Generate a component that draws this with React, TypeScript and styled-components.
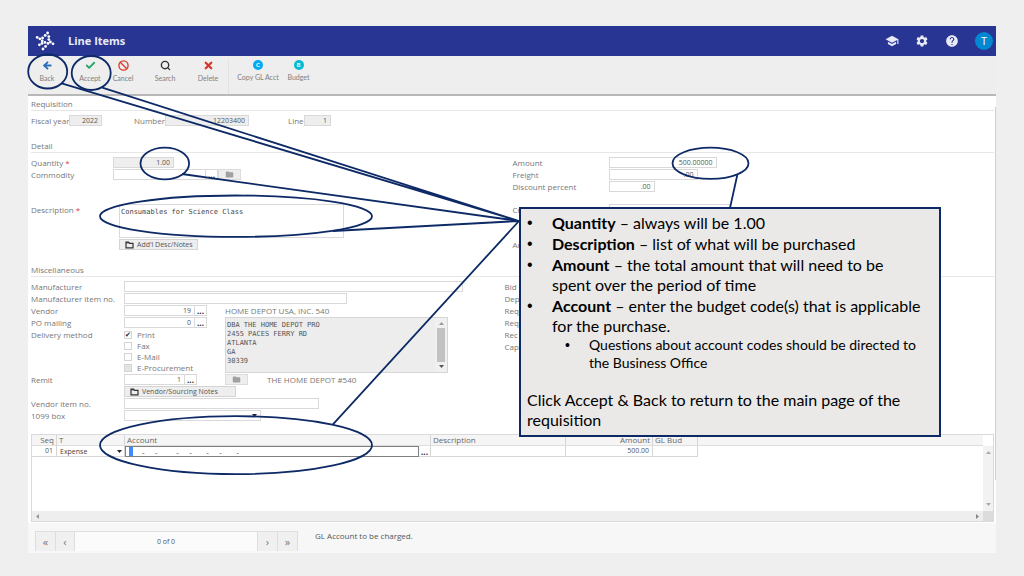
import React from "react";
import styled, { createGlobalStyle } from "styled-components";
import { ArrowLeft, Check, Search, X, Ban } from "lucide-react";
import { MdSchool, MdSettings, MdHelp, MdFolder } from "react-icons/md";

const ui = `"Open Sans", "Noto Sans", sans-serif`;
const mono = `"DejaVu Sans Mono", monospace`;
const navy = "#0d2a66";

const GlobalStyle = createGlobalStyle`
  * { box-sizing: border-box; }
  body { margin: 0; background: #efefef; font-family: ${ui}; font-size: 8px; color: #777; }
  button, input, select, textarea { font-family: inherit; margin: 0; border-radius: 0; outline: none; }
`;

const Page = styled.div`
  position: relative;
  min-height: 100vh;
  padding: 26px 28px 24px;
`;
const Header = styled.header`
  display: flex;
  align-items: center;
  height: 30px;
  padding: 0 3px 0 7px;
  background: #283593;
  color: #e8eaf6;
`;
const Title = styled.h1`
  flex: 1;
  margin: 0 0 0 13px;
  font-size: 11px;
  font-weight: 700;
  line-height: 16px;
`;
const HeaderActions = styled.div`
  display: flex;
  align-items: center;
  gap: 16px;
`;
const IconButton = styled.button`
  display: flex;
  padding: 0;
  border: 0;
  background: none;
  color: inherit;
  font-size: 14px;
`;
const Avatar = styled.button`
  width: 18px;
  height: 18px;
  padding: 0;
  border: 0;
  border-radius: 50% !important;
  background: #0288d1;
  color: #fff;
  font-size: 11px;
  line-height: 18px;
`;

const Toolbar = styled.nav`
  display: flex;
  height: 40px;
  padding-top: 4px;
  background: #eeeeee;
  border-bottom: 2px solid #b8b8b8;
`;
const Tool = styled.button<{ $w: number; $color: string }>`
  display: flex;
  flex-direction: column;
  align-items: center;
  gap: 2px;
  width: ${(p) => p.$w}px;
  height: 22px;
  padding: 0;
  border: 0;
  background: none;
  color: #808080;
  font-family: Lato, sans-serif;
  font-size: 7px;
  line-height: 10px;
  white-space: nowrap;
  svg { color: ${(p) => p.$color}; flex: none; }
`;
const Divider = styled.span`
  width: 1px;
  height: 34px;
  margin-left: 10px;
  background: #e2e2e2;
`;
const Disc = styled.span<{ $bg: string }>`
  width: 10px;
  height: 10px;
  border-radius: 50%;
  background: ${(p) => p.$bg};
  color: #fff;
  font-size: 6px;
  font-weight: 700;
  line-height: 10px;
  text-align: center;
`;

const Main = styled.main`
  position: relative;
  padding: 1px 2px 1px 3px;
  background: #fff;
`;
const PageScroll = styled.span`
  position: absolute;
  top: 11px;
  right: 0;
  width: 1px;
  height: 373px;
  background: #cfcfcf;
`;
const Section = styled.section`
  padding-bottom: 12px;
`;
const SectionTitle = styled.h2`
  height: 14px;
  margin: 0 0 4px;
  border-bottom: 1px solid #e6e6e6;
  font-size: 8px;
  font-weight: 400;
  line-height: 13px;
`;
const Columns = styled.div<{ $split: string }>`
  display: grid;
  grid-template-columns: ${(p) => p.$split};
`;
const Row = styled.div<{ $label?: number; $gap?: number }>`
  display: flex;
  min-height: 12px;
  margin-top: ${(p) => p.$gap ?? 0}px;
  > label { width: ${(p) => p.$label ?? 82}px; flex: none; }
`;
const Label = styled.label`
  line-height: 12px;
  white-space: nowrap;
  b { color: #e53935; font-weight: 400; }
`;
const Text = styled.span`
  line-height: 12px;
  white-space: nowrap;
`;
const RemitName = styled(Text)`
  margin-left: 19px;
`;
const Pair = styled.div<{ $label: number; $end: number }>`
  display: flex;
  margin-right: ${(p) => p.$end}px;
  > label { width: ${(p) => p.$label}px; }
`;
const Field = styled.input<{ $w: number; $off?: boolean }>`
  width: ${(p) => p.$w}px;
  height: 11px;
  padding: 0 3px;
  border: 1px solid #d9d9d9;
  background: ${(p) => (p.$off ? "#eeeeee" : "#fff")};
  color: #555;
  font-size: 7px;
  line-height: 9px;
  text-align: right;
`;
const More = styled.button`
  width: 12px;
  height: 11px;
  padding: 0;
  border: 1px solid #d9d9d9;
  border-left: 0;
  background: #fff;
  color: #222;
  font-size: 8px;
  font-weight: 700;
  line-height: 7px;
`;
const FolderButton = styled.button`
  display: flex;
  align-items: center;
  justify-content: center;
  width: 23px;
  height: 11px;
  padding: 0;
  border: 1px solid #dcdcdc;
  background: #eeeeee;
  color: #a0a0a0;
  font-size: 9px;
`;
const NotesButton = styled.button<{ $w: number }>`
  display: flex;
  align-items: center;
  gap: 3px;
  width: ${(p) => p.$w}px;
  height: 11px;
  padding: 0 5px;
  border: 1px solid #d4d4d4;
  background: #eeeeee;
  color: #555;
  font-size: 7px;
  line-height: 9px;
  white-space: nowrap;
  svg { flex: none; }
`;
const Stack = styled.div`
  display: flex;
  flex-direction: column;
  gap: 1px;
  margin-left: 6px;
`;
const Notes = styled.textarea`
  width: 225px;
  height: 34px;
  padding: 3px 1px;
  border: 1px solid #d9d9d9;
  background: #fff;
  color: #444;
  font-family: ${mono};
  font-size: 7px;
  line-height: 9px;
  resize: none;
`;

const MiscGrid = styled.div`
  display: grid;
  grid-template-columns: 93px 101px 1fr;
  grid-template-rows: repeat(4, 12px) 45px repeat(4, 12px);
`;
const Cell = styled.div<{ $row: number; $col: string; $span?: number }>`
  display: flex;
  grid-row: ${(p) => p.$row} / span ${(p) => p.$span ?? 1};
  grid-column: ${(p) => p.$col};
`;
const Checks = styled.div`
  display: flex;
  flex-direction: column;
  label { display: flex; align-items: center; gap: 5px; height: 11px; line-height: 11px; white-space: nowrap; }
`;
const Tick = styled.input`
  appearance: none;
  width: 8px;
  height: 8px;
  border: 1px solid #d4d4d4;
  background: ${(p) => (p.disabled ? "#e4e4e4" : "#fff")};
  &:checked::after {
    content: "✔";
    display: block;
    color: #222;
    font: 7px/6px "DejaVu Sans", sans-serif;
  }
`;
const AddressBox = styled.div`
  display: flex;
  width: 223px;
  height: 56px;
  border: 1px solid #d6d6d6;
  background: #ededed;
`;
const Address = styled.textarea`
  flex: 1;
  min-width: 0;
  padding: 3px 1px;
  border: 0;
  background: none;
  color: #555;
  font-family: ${mono};
  font-size: 7px;
  line-height: 9px;
  resize: none;
  overflow: hidden;
`;
const ScrollTrack = styled.div`
  display: flex;
  flex-direction: column;
  align-items: center;
  justify-content: space-between;
  width: 12px;
  padding: 3px 0;
  background: #f0f0f0;
`;
const Thumb = styled.span`
  width: 8px;
  height: 34px;
  background: #c1c1c1;
`;
const SelectBox = styled.div<{ $w: string; $line?: boolean }>`
  display: flex;
  align-items: center;
  width: ${(p) => p.$w};
  height: ${(p) => (p.$line ? 11 : 9)}px;
  padding-right: ${(p) => (p.$line ? 3 : 0)}px;
  border: ${(p) => (p.$line ? "1px solid #d9d9d9" : "0")};
  select {
    appearance: none;
    flex: 1;
    height: 9px;
    min-width: 0;
    padding: 0 1px;
    border: 0;
    background: none;
    color: #444;
    font-size: 7px;
    line-height: 9px;
  }
`;

const GridFrame = styled.div`
  display: flex;
  flex-direction: column;
  border: 1px solid #dadada;
`;
const GridBody = styled.div`
  display: flex;
  min-height: 76px;
`;
const GridScroll = styled.div`
  display: flex;
  flex-direction: column;
  justify-content: space-between;
  align-items: center;
  width: 10px;
  margin-top: 11px;
  padding: 4px 0;
  background: #f2f2f2;
`;
const BottomScroll = styled.div`
  display: flex;
  align-items: center;
  height: 10px;
  background: #eeeeee;
  padding-left: 3px;
  i { flex: 1; }
  b { width: 10px; height: 10px; margin-left: 3px; background: #dcdcdc; }
`;
const TableWrap = styled.div`
  flex: 1;
  min-width: 0;
`;
const Table = styled.table`
  width: 100%;
  table-layout: fixed;
  border-collapse: separate;
  border-spacing: 0;
  th, td { height: 11px; padding: 0 2px; text-align: left; font-weight: 400; line-height: 10px; }
  th { background: #f5f5f5; color: #666; border-right: 1px solid #d6d6d6; border-bottom: 1px solid #dedede; white-space: nowrap; }
  td { border-right: 1px solid #d6d6d6; border-bottom: 1px solid #d6d6d6; color: #555; font-size: 7px; }
  th:last-child, td:last-child { border-right: 0; }
  td:last-child { border-bottom: 0; }
  .num { text-align: right; }
  td.num { padding-right: 3px; }
`;
const AccountCell = styled.div`
  display: flex;
  align-items: center;
  height: 10px;
  margin: 0 -2px;
`;
const AccountField = styled.div`
  display: flex;
  flex: 1;
  height: 11px;
  min-width: 0;
  padding-left: 3px;
  border: 1px solid #808080;
  span { width: 4px; background: #3d8bfd; }
  input { flex: 1; min-width: 0; height: 9px; padding: 0 0 0 9px; border: 0; background: none; color: #444; font-size: 8px; line-height: 9px; }
`;
const Dots = styled.button`
  width: 11px;
  padding: 0;
  border: 0;
  background: none;
  color: #222;
  font-size: 8px;
  font-weight: 700;
  line-height: 7px;
`;

const Footer = styled.footer`
  display: flex;
  min-height: 30px;
  padding: 8px 7px 1px;
  background: #f7f7f7;
  color: #555;
  font-size: 7px;
`;
const Pager = styled.div`
  display: grid;
  grid-template-columns: 20px 19px 183px 20px 19px;
  height: 20px;
  border: 1px solid #dedede;
  button { padding: 0; border: 0; border-right: 1px solid #dedede; background: #f0f0f0; color: #777; font-size: 11px; line-height: 16px; }
  span { border-right: 1px solid #dedede; background: #fbfbfb; text-align: center; line-height: 19px; }
  button:last-child { border-right: 0; }
`;
const Hint = styled.p`
  margin: 0 0 0 17px;
  line-height: 10px;
  font-size: 8px;
`;

const Ink = styled.svg`
  position: absolute;
  top: 0;
  left: 0;
  pointer-events: none;
  fill: none;
  stroke: ${navy};
  stroke-width: 1.8;
`;
const Callout = styled.aside`
  position: absolute;
  top: 207px;
  left: 519px;
  width: 422px;
  height: 230px;
  padding: 4px 6px;
  border: 2px solid ${navy};
  background: #eae9e7;
  color: #000;
  font-family: Lato, "Liberation Sans", sans-serif;
  font-size: 16px;
  line-height: 20px;
  white-space: nowrap;
  ul { margin: 0; padding: 0; list-style: none; }
  p { margin: 18px 0 0; }
`;
const Point = styled.li<{ $small?: boolean }>`
  display: flex;
  margin-top: ${(p) => (p.$small ? 0 : 1)}px;
  padding-left: ${(p) => (p.$small ? 38 : 0)}px;
  font-size: ${(p) => (p.$small ? 14 : 16)}px;
  line-height: ${(p) => (p.$small ? 18 : 20)}px;
  &:first-child { margin-top: 0; }
  &::before { content: "•"; width: ${(p) => (p.$small ? 24 : 25)}px; flex: none; font-family: "Liberation Sans", sans-serif; }
`;

const Logo = () => (
  <svg width="20" height="20" viewBox="0 0 20 20" fill="#fff" aria-hidden="true">
    {[
      [12.6, 2], [10.2, 4.4], [7.6, 7], [2.2, 6.4], [4.9, 7.8], [7.2, 9.8],
      [13.8, 5.6], [13.8, 8.6], [15.4, 11], [18, 12.8],
      [4.4, 13.8], [7, 12.4], [10, 11.4], [13, 12.4], [10.6, 15.4], [8, 18],
    ].map(([x, y]) => (
      <circle key={`${x}-${y}`} cx={x} cy={y} r="1.4" />
    ))}
  </svg>
);
const FolderLine = () => (
  <svg width="9" height="8" viewBox="0 0 9 8" fill="none" stroke="#333" strokeWidth="1.2" aria-hidden="true">
    <path d="M1 1.2h2.6l1 1.1H8v4.6H1z" />
    <path d="M1 1.7h3" />
  </svg>
);
const Arrow = ({ d, color = "#777" }: { d: "up" | "down" | "left" | "right"; color?: string }) => (
  <svg width="5" height="5" viewBox="0 0 5 5" fill={color} aria-hidden="true">
    <path d={{ up: "M0 4L2.5 1 5 4z", down: "M0 1h5L2.5 4z", left: "M4 0v5L1 2.5z", right: "M1 0l3 2.5L1 5z" }[d]} />
  </svg>
);

const ACCOUNT_MASK = [0, 5, 9, 5, 7, 5, 7].map((n) => "\u00a0".repeat(n) + "-").join("");

export default function App() {
  return (
    <Page>
      <GlobalStyle />
      <Header>
        <Logo />
        <Title>Line Items</Title>
        <HeaderActions>
          <IconButton aria-label="Learning"><MdSchool /></IconButton>
          <IconButton aria-label="Settings"><MdSettings /></IconButton>
          <IconButton aria-label="Help"><MdHelp /></IconButton>
          <Avatar>T</Avatar>
        </HeaderActions>
      </Header>

      <Toolbar>
        <Tool $w={38} $color="#2a6ebb"><ArrowLeft size={11} strokeWidth={4} />Back</Tool>
        <Tool $w={48} $color="#27a567"><Check size={11} strokeWidth={4} />Accept</Tool>
        <Tool $w={18} $color="#dd3b2a"><Ban size={11} strokeWidth={3} />Cancel</Tool>
        <Tool $w={66} $color="#333"><Search size={11} strokeWidth={3} />Search</Tool>
        <Tool $w={20} $color="#d9382b"><X size={11} strokeWidth={5} />Delete</Tool>
        <Divider />
        <Tool $w={58} $color="#03a9f4"><Disc $bg="#03a9f4">C</Disc>Copy GL Acct</Tool>
        <Tool $w={23} $color="#00bcd4"><Disc $bg="#00bcd4">B</Disc>Budget</Tool>
      </Toolbar>

      <Main>
        <PageScroll />
        <Section>
          <SectionTitle>Requisition</SectionTitle>
          <Row>
            <Pair $label={38} $end={32}>
              <Label htmlFor="fy">Fiscal year</Label>
              <Field id="fy" $w={33} $off readOnly value="2022" />
            </Pair>
            <Pair $label={31} $end={39}>
              <Label htmlFor="num">Number</Label>
              <Field id="num" $w={84} $off readOnly value="12203400" />
            </Pair>
            <Pair $label={16} $end={0}>
              <Label htmlFor="line">Line</Label>
              <Field id="line" $w={27} $off readOnly value="1" />
            </Pair>
          </Row>
        </Section>

        <Section>
          <SectionTitle>Detail</SectionTitle>
          <Columns $split="1fr 1fr">
            <div>
              <Row>
                <Label htmlFor="qty">Quantity <b>*</b></Label>
                <Field id="qty" $w={61} $off readOnly value="1.00" />
              </Row>
              <Row>
                <Label htmlFor="com">Commodity</Label>
                <Field id="com" $w={93} />
                <More aria-label="Find commodity">...</More>
                <FolderButton aria-label="Commodity files"><MdFolder /></FolderButton>
              </Row>
              <Row $gap={23}>
                <Label htmlFor="desc">Description <b>*</b></Label>
                <Stack>
                  <Notes id="desc" defaultValue="Consumables for Science Class" />
                  <NotesButton $w={79}><FolderLine />Add'l Desc/Notes</NotesButton>
                </Stack>
              </Row>
            </div>
            <div>
              <Row $label={96}>
                <Label htmlFor="amt">Amount</Label>
                <Field id="amt" $w={108} defaultValue="500.00000" />
              </Row>
              <Row $label={96}>
                <Label htmlFor="frt">Freight</Label>
                <Field id="frt" $w={89} defaultValue=".00" />
              </Row>
              <Row $label={96}>
                <Label htmlFor="dsc">Discount percent</Label>
                <Field id="dsc" $w={46} defaultValue=".00" />
              </Row>
              <Row $label={96} $gap={11}>
                <Label htmlFor="crd">Cr</Label>
                <Field id="crd" $w={121} defaultValue=".00" />
              </Row>
              <Row $label={96} $gap={23}>
                <Text>Am</Text>
              </Row>
            </div>
          </Columns>
        </Section>

        <Section>
          <SectionTitle>Miscellaneous</SectionTitle>
          <Columns $split="59fr 61fr">
            <MiscGrid>
              <Cell $row={1} $col="1"><Label htmlFor="mfr">Manufacturer</Label></Cell>
              <Cell $row={1} $col="2 / 4"><Field id="mfr" $w={339} /></Cell>
              <Cell $row={2} $col="1"><Label htmlFor="mfi">Manufacturer item no.</Label></Cell>
              <Cell $row={2} $col="2 / 4"><Field id="mfi" $w={223} /></Cell>
              <Cell $row={3} $col="1"><Label htmlFor="ven">Vendor</Label></Cell>
              <Cell $row={3} $col="2"><Field id="ven" $w={71} defaultValue="19" /><More aria-label="Find vendor">...</More></Cell>
              <Cell $row={3} $col="3"><Text>HOME DEPOT USA, INC. 540</Text></Cell>
              <Cell $row={4} $col="1"><Label htmlFor="pom">PO mailing</Label></Cell>
              <Cell $row={4} $col="2"><Field id="pom" $w={71} defaultValue="0" /><More aria-label="Find mailing">...</More></Cell>
              <Cell $row={4} $col="3" $span={2}>
                <AddressBox>
                  <Address
                    aria-label="Vendor address"
                    readOnly
                    value={"DBA THE HOME DEPOT PRO\n2455 PACES FERRY RD\nATLANTA\nGA\n30339"}
                  />
                  <ScrollTrack>
                    <Arrow d="up" color="#999" />
                    <Thumb />
                    <Arrow d="down" color="#555" />
                  </ScrollTrack>
                </AddressBox>
              </Cell>
              <Cell $row={5} $col="1"><Text>Delivery method</Text></Cell>
              <Cell $row={5} $col="2">
                <Checks>
                  <label><Tick type="checkbox" defaultChecked />Print</label>
                  <label><Tick type="checkbox" />Fax</label>
                  <label><Tick type="checkbox" />E-Mail</label>
                  <label><Tick type="checkbox" disabled />E-Procurement</label>
                </Checks>
              </Cell>
              <Cell $row={6} $col="1"><Label htmlFor="rem">Remit</Label></Cell>
              <Cell $row={6} $col="2"><Field id="rem" $w={61} defaultValue="1" /><More aria-label="Find remit">...</More></Cell>
              <Cell $row={6} $col="3">
                <FolderButton aria-label="Remit files"><MdFolder /></FolderButton>
                <RemitName>THE HOME DEPOT #540</RemitName>
              </Cell>
              <Cell $row={7} $col="2 / 4"><NotesButton $w={112}><FolderLine />Vendor/Sourcing Notes</NotesButton></Cell>
              <Cell $row={8} $col="1"><Label htmlFor="vin">Vendor item no.</Label></Cell>
              <Cell $row={8} $col="2 / 4"><Field id="vin" $w={195} /></Cell>
              <Cell $row={9} $col="1"><Label htmlFor="box">1099 box</Label></Cell>
              <Cell $row={9} $col="2 / 4">
                <SelectBox $w="137px" $line>
                  <select id="box"><option /></select>
                  <Arrow d="down" color="#222" />
                </SelectBox>
              </Cell>
            </MiscGrid>
            <div>
              {["Bid", "Dep", "Req", "Req", "Rec", "Cap"].map((t, i) => (
                <Row key={i}><Text>{t}</Text></Row>
              ))}
            </div>
          </Columns>
        </Section>

        <GridFrame>
          <GridBody>
            <TableWrap>
              <Table>
                <colgroup>
                  <col width="25" /><col width="68" /><col width="306" /><col width="135" />
                  <col width="87" /><col width="45" /><col />
                </colgroup>
                <thead>
                  <tr>
                    <th className="num">Seq</th><th>T</th><th>Account</th><th>Description</th>
                    <th className="num">Amount</th><th>GL Bud</th><th />
                  </tr>
                </thead>
                <tbody>
                  <tr>
                    <td className="num">01</td>
                    <td>
                      <SelectBox $w="100%">
                        <select aria-label="Type"><option>Expense</option></select>
                        <Arrow d="down" color="#222" />
                      </SelectBox>
                    </td>
                    <td>
                      <AccountCell>
                        <AccountField>
                          <span />
                          <input aria-label="Account" defaultValue={ACCOUNT_MASK} />
                        </AccountField>
                        <Dots aria-label="Find account">...</Dots>
                      </AccountCell>
                    </td>
                    <td />
                    <td className="num">500.00</td>
                    <td />
                    <td />
                  </tr>
                </tbody>
              </Table>
            </TableWrap>
            <GridScroll>
              <Arrow d="up" color="#aaa" />
              <Arrow d="down" color="#aaa" />
            </GridScroll>
          </GridBody>
          <BottomScroll>
            <Arrow d="left" color="#999" />
            <i />
            <Arrow d="right" color="#888" />
            <b />
          </BottomScroll>
        </GridFrame>
      </Main>

      <Footer>
        <Pager>
          <button aria-label="First">«</button>
          <button aria-label="Previous">‹</button>
          <span>0 of 0</span>
          <button aria-label="Next">›</button>
          <button aria-label="Last">»</button>
        </Pager>
        <Hint>GL Account to be charged.</Hint>
      </Footer>

      <Ink width="1024" height="576" viewBox="0 0 1024 576" aria-hidden="true">
        <ellipse cx="47.7" cy="71.5" rx="19.5" ry="17" />
        <ellipse cx="91.2" cy="73" rx="19.5" ry="17" />
        <ellipse cx="164.8" cy="163.5" rx="24.3" ry="15.8" />
        <ellipse cx="236" cy="216.2" rx="136" ry="20.7" />
        <ellipse cx="710.5" cy="163.3" rx="38" ry="15.6" />
        <ellipse cx="236" cy="445.2" rx="136" ry="29" />
        <path d="M61.7 83.3L519 221M102.3 87.7L519 221M182 174L519 221M333 231L519 221M332.7 424.7L519 221M737.3 175L730 208" />
      </Ink>

      <Callout>
        <ul>
          <Point><div><b>Quantity</b> – always will be 1.00</div></Point>
          <Point><div><b>Description</b> – list of what will be purchased</div></Point>
          <Point><div><b>Amount</b> – the total amount that will need to be<br />spent over the period of time</div></Point>
          <Point><div><b>Account</b> – enter the budget code(s) that is applicable<br />for the purchase.</div></Point>
          <Point $small><div>Questions about account codes should be directed to<br />the Business Office</div></Point>
        </ul>
        <p>Click Accept &amp; Back to return to the main page of the<br />requisition</p>
      </Callout>
    </Page>
  );
}
